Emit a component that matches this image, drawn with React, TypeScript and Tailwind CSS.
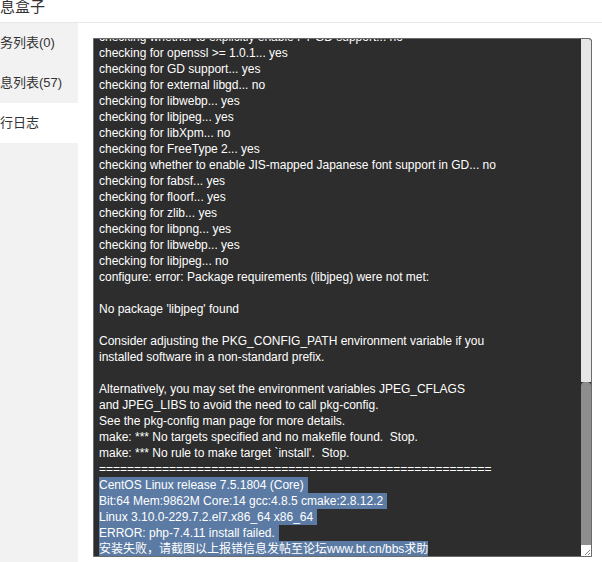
import React from 'react'

const lines: string[] = [
  'checking whether to explicitly enable FT GD support... no',
  'checking for openssl >= 1.0.1... yes',
  'checking for GD support... yes',
  'checking for external libgd... no',
  'checking for libwebp... yes',
  'checking for libjpeg... yes',
  'checking for libXpm... no',
  'checking for FreeType 2... yes',
  'checking whether to enable JIS-mapped Japanese font support in GD... no',
  'checking for fabsf... yes',
  'checking for floorf... yes',
  'checking for zlib... yes',
  'checking for libpng... yes',
  'checking for libwebp... yes',
  'checking for libjpeg... no',
  'configure: error: Package requirements (libjpeg) were not met:',
  '',
  "No package 'libjpeg' found",
  '',
  'Consider adjusting the PKG_CONFIG_PATH environment variable if you',
  'installed software in a non-standard prefix.',
  '',
  'Alternatively, you may set the environment variables JPEG_CFLAGS',
  'and JPEG_LIBS to avoid the need to call pkg-config.',
  'See the pkg-config man page for more details.',
  'make: *** No targets specified and no makefile found.  Stop.',
  "make: *** No rule to make target `install'.  Stop.",
  '='.repeat(56),
]

const selected: string[] = [
  'CentOS Linux release 7.5.1804 (Core)',
  'Bit:64 Mem:9862M Core:14 gcc:4.8.5 cmake:2.8.12.2',
  'Linux 3.10.0-229.7.2.el7.x86_64 x86_64',
  'ERROR: php-7.4.11 install failed.',
  '安装失败，请截图以上报错信息发帖至论坛www.bt.cn/bbs求助',
]

export default function App() {
  return (
    <div className="w-[602px] h-[562px] bg-white flex flex-col overflow-hidden font-['Liberation_Sans','Noto_Sans_CJK_SC',sans-serif] text-[#333]">
      {/* 顶部标题 */}
      <header className="h-[23px] shrink-0 border-b border-[#e8e8e8] overflow-hidden">
        <div className="text-[15px] leading-[18px] -mt-[2px]">息盒子</div>
      </header>

      <div className="flex flex-1 min-h-0">
        {/* 侧边栏 */}
        <aside className="w-[78px] shrink-0 bg-[#f2f2f2] text-[13px]">
          <div className="h-[40px] flex items-center">务列表(0)</div>
          <div className="h-[40px] flex items-center">息列表(57)</div>
          <div className="h-[40px] flex items-center bg-white">行日志</div>
        </aside>

        {/* 日志窗口 */}
        <main className="flex-1 pl-[15px] pt-[15px]">
          <div className="w-[499px] h-[519px] border border-[#6b6b6b] rounded-tr-[3px] bg-[#2d2d2d] flex overflow-hidden">
            <div className="flex-1 overflow-hidden pl-[5px] text-white text-[12px] leading-[16px] whitespace-pre">
              <div className="-mt-[10px]">
                {lines.map((l, i) => (
                  <div key={i} className="h-[16px]">{l}</div>
                ))}
                {selected.map((l, i) => (
                  <div key={'s' + i} className="h-[16px]">
                    <span className={`inline-block h-[16px] bg-[#5b7ba4] ${i < selected.length - 1 ? 'pr-[4px]' : ''}`}>{l}</span>
                  </div>
                ))}
              </div>
            </div>
            {/* 滚动条 */}
            <div className="w-[10px] shrink-0 flex flex-col">
              <div className="flex-1 bg-[#e6e6e6] rounded-tr-[2px]" />
              <div className="h-[163px] bg-[#8e8e8e] rounded-t-[4px]" />
              <div className="h-[11px] bg-white relative">
                <svg width="10" height="11" viewBox="0 0 10 11" className="absolute inset-0">
                  <path d="M9 5 L4 10 M9 8 L7 10" stroke="#888" strokeWidth="1" />
                </svg>
              </div>
            </div>
          </div>
        </main>
      </div>
    </div>
  )
}
